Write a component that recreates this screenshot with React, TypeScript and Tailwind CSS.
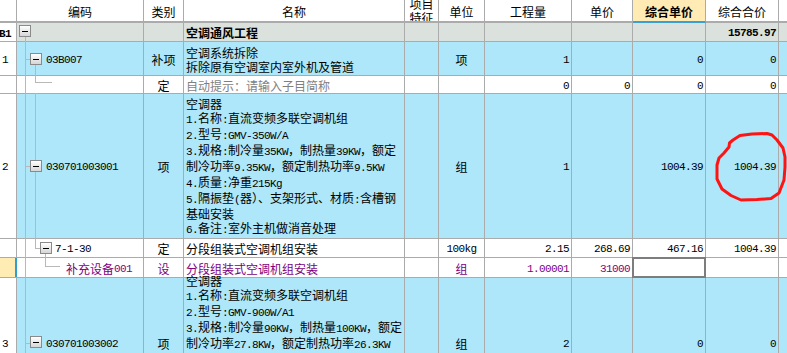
import React from 'react'

// column widths include the 1px right grid line
const W = {
  no: 'w-[17px]',
  code: 'w-[127px]',
  kind: 'w-[40px]',
  name: 'w-[221px]',
  feat: 'w-[34px]',
  unit: 'w-[46px]',
  qty: 'w-[87px]',
  price: 'w-[61px]',
  uprice: 'w-[73px]',
  total: 'w-[73px]',
}

// ascii runs get a narrow mono face, like the half-width glyphs of the original
const T = ({ s }: { s: string }) => (
  <>
    {s.split(/([\x20-\x7e]+)/).map((p, i) =>
      i % 2 ? (
        <span key={i} className="font-['Liberation_Mono',monospace] text-[11px] tracking-[-0.6px]">
          {p}
        </span>
      ) : (
        p
      )
    )}
  </>
)

const Cell = ({ w, className = '', children }: { w: string; className?: string; children?: React.ReactNode }) => (
  <div className={`relative shrink-0 flex items-center pt-[2px] border-r border-[#ababab] whitespace-nowrap ${w} ${className}`}>
    {children}
  </div>
)

const Row = ({ h, bg, children }: { h: string; bg: string; children: React.ReactNode }) => (
  <div className={`flex border-b border-[#ababab] ${h} ${bg}`}>
    {children}
    <div className="flex-1" />
  </div>
)

const Num = ({ w, v, className = '' }: { w: string; v?: string; className?: string }) => (
  <Cell w={w} className={`justify-end pr-[2px] ${className}`}>
    {v && <T s={v} />}
  </Cell>
)

const Mid = ({ w, v, className = '' }: { w: string; v?: string; className?: string }) => (
  <Cell w={w} className={`justify-center ${className}`}>
    {v && <T s={v} />}
  </Cell>
)

const MinusBox = ({ className }: { className: string }) => (
  <div className={`absolute w-[12px] h-[12px] border border-[#8a8a8a] bg-linear-to-b from-white to-[#d6d6d6] flex items-center justify-center ${className}`}>
    <div className="w-[6px] h-px bg-black" />
  </div>
)

const line = 'absolute bg-[#b8b8b8]'

const Lines = ({ lines }: { lines: string[] }) => (
  <Cell w={W.name} className="flex-col items-start justify-center pl-[2px]">
    {lines.map((l, i) => (
      <div key={i}>
        <T s={l} />
      </div>
    ))}
  </Cell>
)

const spec2 = [
  '空调器',
  '1.名称:直流变频多联空调机组',
  '2.型号:GMV-350W/A',
  '3.规格:制冷量35KW，制热量39KW，额定',
  '制冷功率9.35KW，额定制热功率9.5KW',
  '4.质量:净重215Kg',
  '5.隔振垫(器）、支架形式、材质:含槽钢',
  '基础安装',
  '6.备注:室外主机做消音处理',
]

const spec3 = [
  '空调器',
  '1.名称:直流变频多联空调机组',
  '2.型号:GMV-900W/A1',
  '3.规格:制冷量90KW，制热量100KW，额定',
  '制冷功率27.8KW，额定制热功率26.3KW',
  '4.质量:净重420Kg',
  '5.隔振垫(器）、支架形式、材质:含槽钢',
  '基础安装',
  '6.备注:室外主机做消音处理',
]

export default function App() {
  return (
    <div className="relative w-[787px] h-[353px] overflow-hidden bg-white text-black text-[12px] leading-[14px] font-['Noto_Sans_CJK_SC',sans-serif]">
      {/* header */}
      <div className="flex h-[23px] bg-white">
        {[
          [W.no, ''],
          [W.code, '编码'],
          [W.kind, '类别'],
          [W.name, '名称'],
        ].map(([w, t]) => (
          <Cell key={w} w={w} className="justify-center border-b-2">
            {t}
          </Cell>
        ))}
        <div className={`shrink-0 flex flex-col items-center justify-center overflow-hidden border-r border-b-2 border-[#ababab] ${W.feat}`}>
          <div>项目</div>
          <div>特征</div>
        </div>
        <Cell w={W.unit} className="justify-center border-b-2">单位</Cell>
        <Cell w={W.qty} className="justify-center border-b-2">工程量</Cell>
        <Cell w={W.price} className="justify-center border-b-2">单价</Cell>
        <Cell w={W.uprice} className="justify-center border-b-2 border-b-[#3a9fd5] bg-[#ffebb3] font-bold">
          综合单价
        </Cell>
        <Cell w={W.total} className="justify-center border-b-2">综合合价</Cell>
        <div className="flex-1 border-b-2 border-[#ababab]" />
      </div>

      {/* B1 */}
      <Row h="h-[19px]" bg="bg-[#dbe2de]">
        <Cell w={W.no} className="bg-white font-bold">
          <span className="-ml-[1px]"><T s="B1" /></span>
        </Cell>
        <Cell w={W.code}>
          <div className={`${line} left-[8px] top-1/2 -bottom-px w-px`} />
          <MinusBox className="left-[2px] top-[2px]" />
        </Cell>
        <Mid w={W.kind} />
        <Cell w={W.name} className="pl-[2px] font-bold">空调通风工程</Cell>
        <Mid w={W.feat} />
        <Mid w={W.unit} />
        <Num w={W.qty} />
        <Num w={W.price} />
        <Num w={W.uprice} />
        <Num w={W.total} v="15785.97" className="font-bold" />
      </Row>

      {/* 1 */}
      <Row h="h-[34px]" bg="bg-[#ade7f9]">
        <Cell w={W.no} className="bg-white pl-[2px]"><T s="1" /></Cell>
        <Cell w={W.code} className="pl-[29px]">
          <div className={`${line} left-[8px] -top-px -bottom-px w-px`} />
          <div className={`${line} left-[8px] top-1/2 w-[5px] h-px`} />
          <div className={`${line} left-[18px] top-1/2 -bottom-px w-px`} />
          <MinusBox className="left-[13px] top-[11px]" />
          <T s="03B007" />
        </Cell>
        <Mid w={W.kind} v="补项" />
        <Lines lines={['空调系统拆除', '拆除原有空调室内室外机及管道']} />
        <Mid w={W.feat} />
        <Mid w={W.unit} v="项" />
        <Num w={W.qty} v="1" />
        <Num w={W.price} />
        <Num w={W.uprice} v="0" />
        <Num w={W.total} v="0" />
      </Row>

      {/* 定 */}
      <Row h="h-[18px]" bg="bg-white">
        <Cell w={W.no} />
        <Cell w={W.code}>
          <div className={`${line} left-[8px] -top-px -bottom-px w-px`} />
          <div className={`${line} left-[18px] -top-px h-[7px] w-px`} />
          <div className={`${line} left-[18px] top-[6px] w-[17px] h-px`} />
        </Cell>
        <Mid w={W.kind} v="定" />
        <Cell w={W.name} className="pl-[2px] text-[#7f7f7f]">自动提示：请输入子目简称</Cell>
        <Mid w={W.feat} />
        <Mid w={W.unit} />
        <Num w={W.qty} v="0" />
        <Num w={W.price} v="0" />
        <Num w={W.uprice} v="0" />
        <Num w={W.total} v="0" />
      </Row>

      {/* 2 */}
      <Row h="h-[145px]" bg="bg-[#ade7f9]">
        <Cell w={W.no} className="bg-white pl-[2px]"><T s="2" /></Cell>
        <Cell w={W.code} className="pl-[29px]">
          <div className={`${line} left-[8px] -top-px -bottom-px w-px`} />
          <div className={`${line} left-[8px] top-1/2 w-[5px] h-px`} />
          <div className={`${line} left-[18px] -top-px -bottom-px w-px`} />
          <MinusBox className="left-[13px] top-[66px]" />
          <T s="030701003001" />
        </Cell>
        <Mid w={W.kind} v="项" />
        <Lines lines={spec2} />
        <Mid w={W.feat} />
        <Mid w={W.unit} v="组" />
        <Num w={W.qty} v="1" />
        <Num w={W.price} />
        <Num w={W.uprice} v="1004.39" />
        <Num w={W.total} v="1004.39" />
      </Row>

      {/* 7-1-30 */}
      <Row h="h-[19px]" bg="bg-white">
        <Cell w={W.no} />
        <Cell w={W.code} className="pl-[38px]">
          <div className={`${line} left-[8px] -top-px -bottom-px w-px`} />
          <div className={`${line} left-[18px] -top-px h-[10px] w-px`} />
          <div className={`${line} left-[18px] top-[9px] w-[5px] h-px`} />
          <div className={`${line} left-[28px] top-[9px] -bottom-px w-px`} />
          <MinusBox className="left-[23px] top-[3px]" />
          <T s="7-1-30" />
        </Cell>
        <Mid w={W.kind} v="定" />
        <Cell w={W.name} className="pl-[2px]">分段组装式空调机组安装</Cell>
        <Mid w={W.feat} />
        <Mid w={W.unit} v="100kg" />
        <Num w={W.qty} v="2.15" />
        <Num w={W.price} v="268.69" />
        <Num w={W.uprice} v="467.16" />
        <Num w={W.total} v="1004.39" />
      </Row>

      {/* 补充设备 */}
      <Row h="h-[20px]" bg="bg-white">
        <Cell w={W.no} className="bg-[#ffebb4] border-r-2 border-r-[#2e9fd2]" />
        <Cell w={W.code} className="pl-[49px] text-[#800080]">
          <div className={`${line} left-[8px] -top-px -bottom-px w-px`} />
          <div className={`${line} left-[28px] -top-px h-[9px] w-px`} />
          <div className={`${line} left-[28px] top-[8px] w-[15px] h-px`} />
          <T s="补充设备001" />
        </Cell>
        <Mid w={W.kind} v="设" className="text-[#800080]" />
        <Cell w={W.name} className="pl-[2px] text-[#800080]">分段组装式空调机组安装</Cell>
        <Mid w={W.feat} />
        <Mid w={W.unit} v="组" className="text-[#800080]" />
        <Num w={W.qty} v="1.00001" className="text-[#800080]" />
        <Num w={W.price} v="31000" className="text-[#800080]" />
        <Cell w={W.uprice}>
          <div className="absolute -inset-px border-2 border-[#7d7d7d]" />
        </Cell>
        <Num w={W.total} />
      </Row>

      {/* 3 */}
      <Row h="h-[131px]" bg="bg-[#ade7f9]">
        <Cell w={W.no} className="bg-white pl-[2px]"><T s="3" /></Cell>
        <Cell w={W.code} className="pl-[29px]">
          <div className={`${line} left-[8px] -top-px -bottom-px w-px`} />
          <div className={`${line} left-[8px] top-1/2 w-[5px] h-px`} />
          <MinusBox className="left-[13px] top-[58px]" />
          <T s="030701003002" />
        </Cell>
        <Mid w={W.kind} v="项" />
        <Lines lines={spec3} />
        <Mid w={W.feat} />
        <Mid w={W.unit} v="组" />
        <Num w={W.qty} v="2" />
        <Num w={W.price} />
        <Num w={W.uprice} v="0" />
        <Num w={W.total} v="0" />
      </Row>

      {/* hand drawn red ring */}
      <svg className="absolute inset-0 pointer-events-none" width={787} height={353}>
        <path
          d="M733 140 L740 135.5 L752 134 L767 133.5 L772 135 L777 140 L783 148 L785 157 L785 167 L784 180 L779 193 L771 198.5 L757 199.5 L741 200 L731 195.5 L722 189 L717 179 L717 165 L719 158 L724 153 L729 147 L729.5 143 L733 140"
          fill="none"
          stroke="#ff1414"
          strokeWidth={3}
          strokeLinejoin="round"
          strokeLinecap="round"
        />
      </svg>
    </div>
  )
}
